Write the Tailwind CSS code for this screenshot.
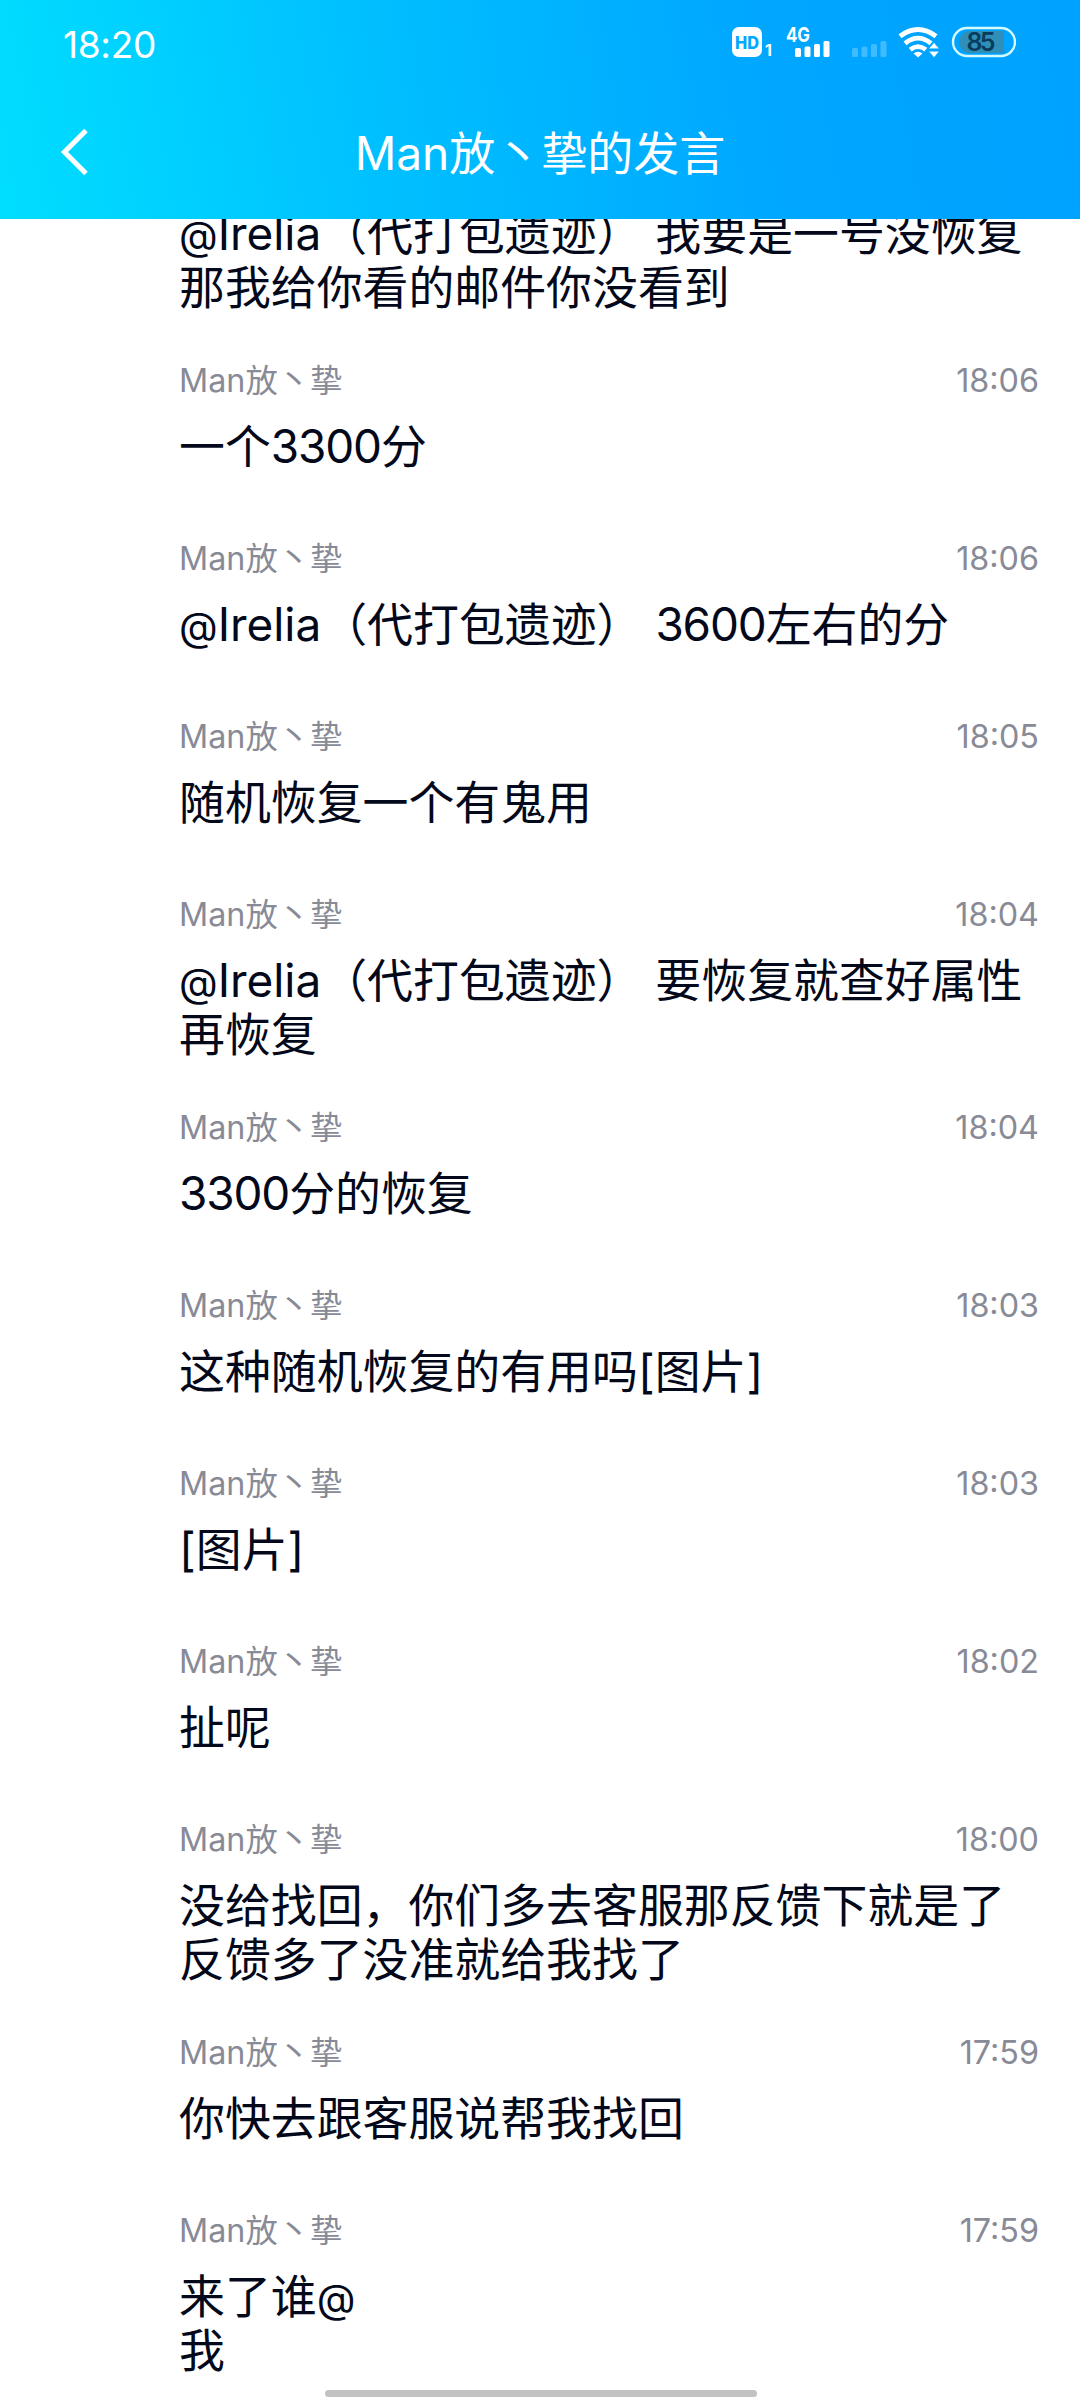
<!DOCTYPE html>
<html lang="zh-CN">
<head>
    <meta charset="UTF-8">
    <meta name="viewport" content="width=device-width, initial-scale=1.0">
    <title>Man放丶挚的发言</title>
    <script src="https://cdn.jsdelivr.net/npm/@tailwindcss/browser@4"></script>
</head>
<body class="w-[1080px] h-[2400px] overflow-hidden relative bg-white flex flex-col font-['Inter','Noto_Sans_CJK_SC',sans-serif]">

    <header class="h-[219px] shrink-0 z-10 text-white bg-[linear-gradient(80deg,#00deff_0%,#00bfff_36%,#00a6ff_72%,#00a2ff_100%)]">
        <!-- 状态栏 -->
        <div class="h-[88px] pl-[63px] pr-[64px] flex items-center justify-between">
            <span class="text-[37px] leading-none tracking-[-0.3px]">18:20</span>
            <svg class="w-[290px] h-[88px]" viewBox="726 0 290 88" fill="white">
                <rect x="732" y="27" width="30" height="30" rx="7"/>
                <text x="747" y="48.5" font-size="17" font-weight="800" text-anchor="middle" textLength="24" lengthAdjust="spacingAndGlyphs" fill="#00a8ff">HD</text>
                <text x="765" y="56" font-size="16" font-weight="700">1</text>
                <text x="786" y="41.5" font-size="20" font-weight="700" textLength="24" lengthAdjust="spacingAndGlyphs">4G</text>
                <g>
                    <rect x="795" y="48" width="6" height="9" rx="1.5"/>
                    <rect x="804.5" y="46.5" width="6" height="10.5" rx="1.5"/>
                    <rect x="814" y="44" width="6" height="13" rx="1.5"/>
                    <rect x="823.5" y="41" width="6" height="16" rx="1.5"/>
                </g>
                <g opacity=".25">
                    <rect x="852" y="48" width="6" height="9" rx="1.5"/>
                    <rect x="861.5" y="46.5" width="6" height="10.5" rx="1.5"/>
                    <rect x="871" y="44" width="6" height="13" rx="1.5"/>
                    <rect x="880.5" y="41" width="6" height="16" rx="1.5"/>
                </g>
                <g fill="none" stroke="white" stroke-width="4.8">
                    <path d="M900 36.2Q918 22.8 936 36.2"/>
                    <path d="M905 43.3Q918 33 931 43.3"/>
                    <path d="M910.2 49.6Q918 43.6 925.8 49.6"/>
                </g>
                <path d="M913.5 53.4Q918 50 922.5 53.4L918 57.5z"/>
                <path d="M934 42.5l5.2 6.2h-10.4zM934 57.5l5.2-6.2h-10.4z" stroke="#00a5ff" stroke-width=".5"/>
                <path d="M970 31h34v22h-34a11 11 0 0 1 0-22z" fill="#2f8fb9"/>
                <rect x="953" y="28" width="62" height="28" rx="14" fill="none" stroke="#d5fbff" stroke-width="2.4"/>
                <text x="981" y="51" font-size="25" font-weight="600" text-anchor="middle" textLength="29" fill="#083c5c">85</text>
            </svg>
        </div>
        <!-- 标题栏 -->
        <div class="h-[129px] px-[60px] grid grid-cols-[60px_1fr_60px] items-center">
            <svg class="w-[30px] h-[50px] mb-0.5" viewBox="60 127 30 50" fill="none" stroke="white" stroke-width="5">
                <path d="M86 130.5L64.5 152L86 173.5"/>
            </svg>
            <h1 class="text-center text-[46px] leading-[54px]">Man放丶挚的发言</h1>
        </div>
    </header>

    <main id="list" class="-mt-[12px] pl-[179px] pr-[41px]"></main>

    <div class="absolute left-[325px] top-[2390px] w-[432px] h-[7px] rounded-full bg-[#c2c2c2]"></div>

    <script>
        const messages = [
            { time: '', text: '@Irelia（代打包遗迹） 我要是一号没恢复\n那我给你看的邮件你没看到' },
            { time: '18:06', text: '一个3300分' },
            { time: '18:06', text: '@Irelia（代打包遗迹） 3600左右的分' },
            { time: '18:05', text: '随机恢复一个有鬼用' },
            { time: '18:04', text: '@Irelia（代打包遗迹） 要恢复就查好属性\n再恢复' },
            { time: '18:04', text: '3300分的恢复' },
            { time: '18:03', text: '这种随机恢复的有用吗[图片]' },
            { time: '18:03', text: '[图片]' },
            { time: '18:02', text: '扯呢' },
            { time: '18:00', text: '没给找回，你们多去客服那反馈下就是了\n反馈多了没准就给我找了' },
            { time: '17:59', text: '你快去跟客服说帮我找回' },
            { time: '17:59', text: '来了谁@\n我' }
        ];

        // 数字字距收紧一点，@ 符号小一号
        const format = text => text
            .replace(/\d+/g, n => `<span class='tracking-[-1.1px]'>${n}</span>`)
            .replace(/@/g, `<span class='text-[40px] leading-none'>@</span>`);

        document.getElementById('list').innerHTML = messages.map(m => `
            <div class="${m.time ? 'min-h-[178px]' : ''} pb-[33px]">
                ${m.time ? `
                <div class="h-[72px] pt-[11px] flex justify-between text-[32.3px] leading-[44px] text-[#888a96]">
                    <span>Man放丶挚</span>
                    <span>${m.time}</span>
                </div>` : ''}
                <p class="text-[45.9px] leading-[54px] whitespace-pre text-[#03081a]">${format(m.text)}</p>
            </div>
        `).join('');
    </script>
</body>
</html>
